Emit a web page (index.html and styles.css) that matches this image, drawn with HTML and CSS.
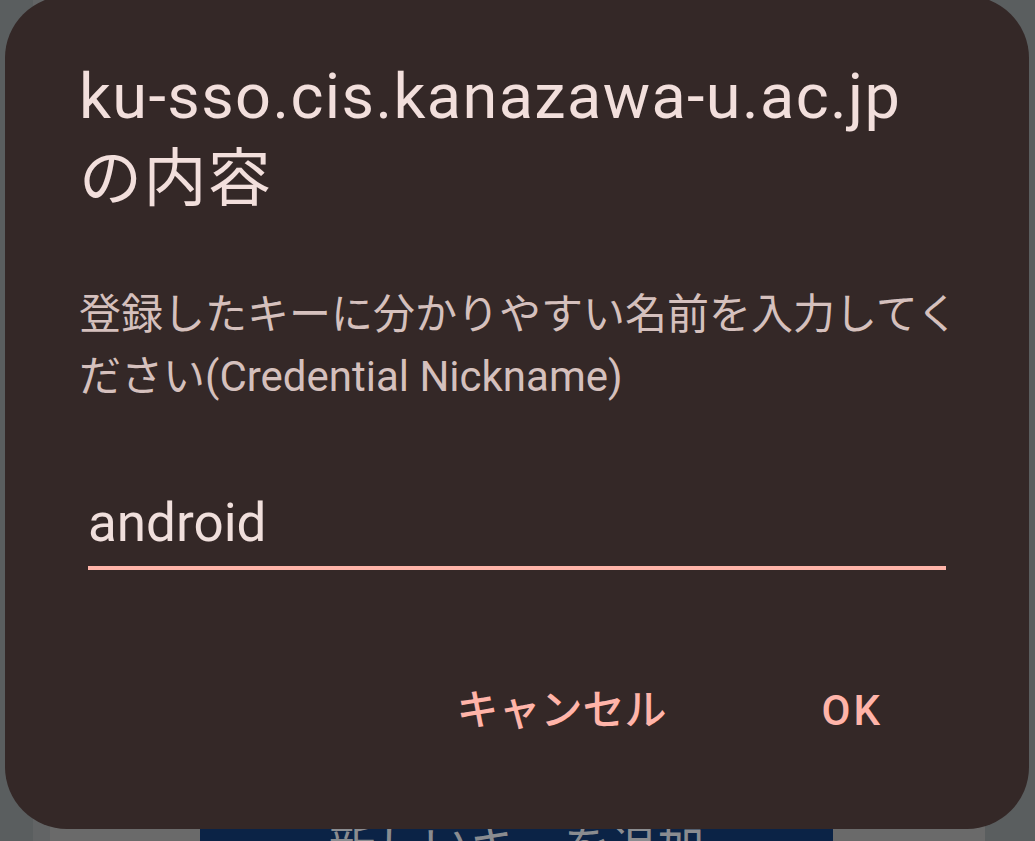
FILE: index.html
```html
<!DOCTYPE html>
<html lang="ja">
<head>
<meta charset="utf-8">
<title>ku-sso.cis.kanazawa-u.ac.jp の内容</title>
<link rel="stylesheet" href="styles.css">
</head>
<body>
<div class="screen">
  <div class="backdrop">
    <div class="card">
      <div class="add-btn">新しいキーを追加</div>
    </div>
  </div>
  <div class="dialog" role="dialog">
    <h1 class="title">ku-sso.cis.kanazawa-u.ac.jp<br>の内容</h1>
    <p class="message">登録したキーに分かりやすい名前を入力してください(Credential Nickname)</p>
    <div class="field">
      <span class="field-value">android</span>
    </div>
    <div class="actions">
      <button class="action">キャンセル</button>
      <button class="action action-ok">OK</button>
    </div>
  </div>
</div>
</body>
</html>
```
FILE: styles.css
```css
* { box-sizing: border-box; }
html, body { margin: 0; padding: 0; }
body {
  width: 1035px;
  height: 841px;
  overflow: hidden;
  background: #5a5e5f;
  font-family: Roboto, "Noto Sans CJK JP", sans-serif;
}
.screen {
  position: relative;
  width: 1035px;
  height: 841px;
  overflow: hidden;
}
.backdrop {
  display: flex;
  height: 841px;
  padding: 0 50px 0 33px;
  background: #5a5e5f;
}
.card {
  flex: 1;
  display: flex;
  flex-direction: column;
  align-items: center;
  padding-top: 817px;
  padding-right: 152px;
  padding-left: 150px;
  background: #6a6a6a;
  border-left: 17px solid #626465;
}
.add-btn {
  width: 633px;
  height: 60px;
  flex: none;
  background: #0b2346;
  color: #8a8c90;
  font-size: 47px;
  line-height: 60px;
  text-align: center;
}
.dialog {
  position: absolute;
  left: 5px;
  top: -4px;
  width: 1024px;
  height: 833px;
  border-radius: 62px;
  background: #342827;
  padding: 60px 69px 0 74px;
}
.title {
  margin: 0;
  font-weight: 400;
  font-size: 63px;
  line-height: 82px;
  letter-spacing: 1.4px;
  color: #f2dfdc;
}
.message {
  margin: 64px 0 0;
  font-size: 42px;
  line-height: 62px;
  color: #d5c0bd;
}
.field {
  margin: 84px 14px 0 9px;
  padding: 0 0 12px 0;
  border-bottom: 4px solid #ffb4a9;
}
.field-value {
  font-size: 53px;
  line-height: 62px;
  color: #f0dfdc;
}
.actions {
  display: flex;
  justify-content: flex-end;
  gap: 155px;
  margin: 111px 80px 0 0;
}
.action {
  border: 0;
  padding: 0;
  background: none;
  font-family: Roboto, "Noto Sans CJK JP", sans-serif;
  font-size: 42px;
  font-weight: 500;
  line-height: 60px;
  color: #ffb4a9;
}
.action-ok {
  letter-spacing: 3px;
  margin-right: -3px;
}
```
